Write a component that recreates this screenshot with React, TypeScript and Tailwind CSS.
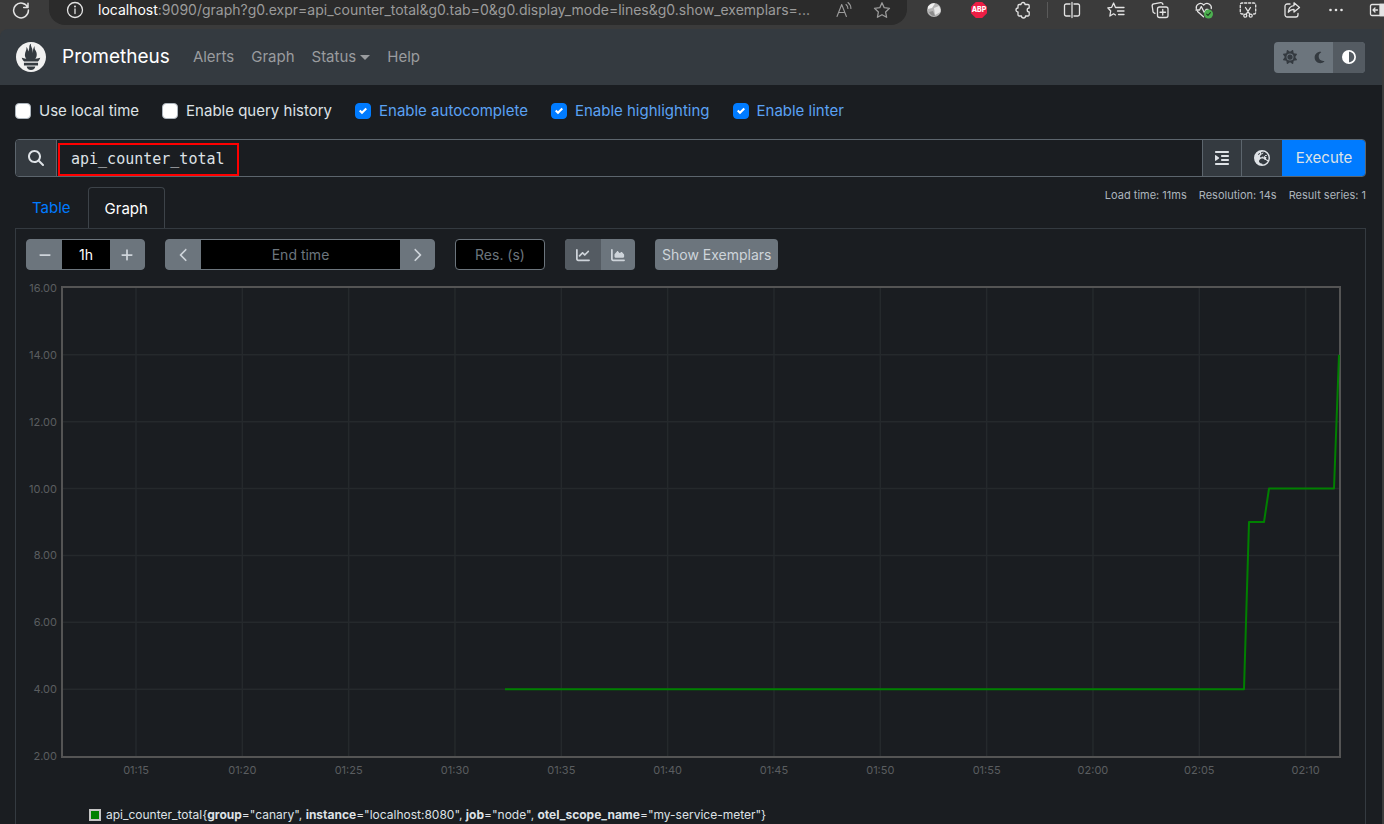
import React, { useState } from 'react';
import {
  FaMagnifyingGlass,
  FaIndent,
  FaEarthEurope,
  FaMinus,
  FaPlus,
  FaChevronLeft,
  FaChevronRight,
  FaChartLine,
  FaChartArea,
  FaSun,
  FaMoon,
  FaCircleHalfStroke,
} from 'react-icons/fa6';
import { SiPrometheus } from 'react-icons/si';

const stroke = {
  fill: 'none',
  stroke: 'currentColor',
  strokeWidth: 1.3,
  strokeLinecap: 'round' as const,
  strokeLinejoin: 'round' as const,
};

function Glyph({ children }: { children: React.ReactNode }) {
  return (
    <svg width="18" height="18" viewBox="0 0 18 18" aria-hidden="true" {...stroke}>
      {children}
    </svg>
  );
}

const toolbar: { name: string; icon: React.ReactNode }[] = [
  {
    name: 'Split screen',
    icon: (
      <Glyph>
        <path d="M7 3H3.2A1.7 1.7 0 0 0 1.5 4.7v8.6A1.7 1.7 0 0 0 3.2 15H7M11 3h3.8a1.7 1.7 0 0 1 1.7 1.7v8.6a1.7 1.7 0 0 1-1.7 1.7H11M9 1.5v15" />
      </Glyph>
    ),
  },
  {
    name: 'Favorites',
    icon: (
      <Glyph>
        <path d="M8.500 6.500 6.600 2 4.700 6.300.8 6.800l2.900 3.200-.8 5 3.700-2.200 1.900 1.200M8.500 6.500H17M10.500 10H17M11.500 13.500H17" />
      </Glyph>
    ),
  },
  {
    name: 'Collections',
    icon: (
      <Glyph>
        <rect x="6.5" y="6" width="10.500" height="10.500" rx="2" />
        <path d="M11.750 8.500v5.500M9 11.250h5.500M4 12.300 2.900 11.800A2 2 0 0 1 1.900 9.600L1.200 5.200A2 2 0 0 1 2.800 2.900L9.600 1.600a2 2 0 0 1 2.300 1.700" />
      </Glyph>
    ),
  },
  {
    name: 'Browser essentials',
    icon: (
      <Glyph>
        <path d="M1.300 7.500C.6 3.500 5.500.6 8.700 4 12 .6 17 3.500 16.300 7.500M2.500 10.500l6 5.300M1 9h3.500L6.300 5.500l3 6 1.700-3h2" />
        <circle cx="13.500" cy="13" r="4.500" fill="#4caf50" stroke="none" />
        <path d="m11.600 13.100 1.400 1.300 2.400-2.700" stroke="#1f3d20" strokeWidth="1.1" />
      </Glyph>
    ),
  },
  {
    name: 'Web capture',
    icon: (
      <Glyph>
        <path d="M4 13H3a1.700 1.700 0 0 1-1.700-1.700V3.700A1.700 1.700 0 0 1 3 2h12a1.700 1.700 0 0 1 1.700 1.700v7.600A1.700 1.700 0 0 1 15 13h-1" strokeDasharray="2.200 1.800" />
        <path d="m6.500 6.500 4.200 6.700M11.500 6.500l-4.200 6.700" />
        <circle cx="6.300" cy="14.700" r="1.500" />
        <circle cx="11.700" cy="14.700" r="1.500" />
      </Glyph>
    ),
  },
  {
    name: 'Share',
    icon: (
      <Glyph>
        <path d="M7 3H4.200A2.200 2.200 0 0 0 2 5.200v8.600A2.200 2.200 0 0 0 4.200 16h8.600a2.200 2.200 0 0 0 2.200-2.200V12.500" />
        <path d="M11 1.800 16.500 6.500 11 11V8.300C8.500 8.300 6.700 9.200 5.300 11.200 5.500 7.500 7.500 5 11 4.600Z" />
      </Glyph>
    ),
  },
];

function BrowserBar() {
  return (
    <header className="flex h-[29px] items-start overflow-hidden bg-[#3b3b3b] pl-3 text-[#e4e4e4]">
      <button aria-label="Reload" className="mr-[19px] flex h-5 w-[18px] shrink-0 items-center">
        <Glyph>
          <path d="M15.800 6.500A7.400 7.400 0 1 0 16.400 9M16 2.200v4.300h-4.300" strokeWidth="1.5" />
        </Glyph>
      </button>
      <div className="flex h-[25px] min-w-0 flex-1 items-start rounded-b-[16px] bg-[#2b2b2b] pr-4 pl-[17px]">
        <span className="flex h-5 shrink-0 items-center">
          <Glyph>
            <circle cx="9" cy="9" r="7.5" />
            <path d="M9 8v4.500" />
            <circle cx="9" cy="5.500" r=".4" />
          </Glyph>
        </span>
        <p className="ml-3.5 min-w-0 flex-1 truncate text-sm leading-5 text-[#9b9b9b]">
          <span className="text-white">localhost</span>
          :9090/graph?g0.expr=api_counter_total&amp;g0.tab=0&amp;g0.display_mode=lines&amp;g0.show_exemplars=...
        </p>
        <button aria-label="Read aloud" className="flex h-5 shrink-0 items-center text-[#9b9b9b]">
          <Glyph>
            <path d="M2 15.500 6.700 3.500l4.700 12M3.700 11.500h6M11 3.500q1.900 1.500 1.900 4M13 1.500q3 2.500 2.900 6" strokeWidth="1.1" />
          </Glyph>
        </button>
        <button aria-label="Add to favorites" className="ml-5 flex h-5 shrink-0 items-center text-[#9b9b9b]">
          <Glyph>
            <path d="m9 1.800 2.200 4.900 5.300.6-3.900 3.700 1 5.300L9 13.700l-4.600 2.600 1-5.300L1.500 7.300l5.300-.6Z" />
          </Glyph>
        </button>
      </div>
      <div className="ml-[18px] flex h-5 shrink-0 items-center">
        <button aria-label="Extension" className="flex w-[18px] justify-center">
          <svg width="16" height="16" viewBox="0 0 16 16" aria-hidden="true">
            <circle cx="8" cy="8" r="7" fill="#b5b5b5" />
            <path d="M2 4.500Q6 0 9 1.500L6 6 2 7Z" fill="#f2f2f2" />
            <path d="M8 6l5-2q2 3 1.500 6L9 13Z" fill="#e6e6e6" />
            <path d="M3 10l4-1 2 5q-4 .5-6-4Z" fill="#8b8b8b" />
          </svg>
        </button>
        <button
          aria-label="Ad blocker"
          className="ml-7 flex size-4 items-center justify-center bg-[#ed1e45] text-[7px] font-extrabold text-white [clip-path:polygon(30%_0,70%_0,100%_30%,100%_70%,70%_100%,30%_100%,0_70%,0_30%)]"
        >
          ABP
        </button>
        <button aria-label="Extensions" className="ml-7 flex">
          <Glyph>
            <path d="M6 3.500a2 2 0 0 1 4 0H13a1.200 1.200 0 0 1 1.200 1.200V7a2 2 0 1 0 0 4V13.800A1.200 1.200 0 0 1 13 15h-2.500a2 2 0 0 1-4 0H4.200A1.200 1.200 0 0 1 3 13.800V11a2 2 0 0 1 0-4V4.700A1.200 1.200 0 0 1 4.200 3.500Z" />
          </Glyph>
        </button>
        <span className="ml-3.5 h-4 w-px bg-[#5a5a5a]" />
        <div className="ml-[15px] flex items-center gap-[26px]">
          {toolbar.map((item) => (
            <button key={item.name} aria-label={item.name} className="flex">
              {item.icon}
            </button>
          ))}
          <button aria-label="Settings and more" className="flex">
            <svg width="18" height="18" viewBox="0 0 18 18" fill="currentColor" aria-hidden="true">
              <circle cx="3.500" cy="9" r="1.3" />
              <circle cx="9" cy="9" r="1.3" />
              <circle cx="14.500" cy="9" r="1.3" />
            </svg>
          </button>
        </div>
        <button aria-label="Sidebar" className="ml-6 flex w-[15px] overflow-hidden">
          <svg width="20" height="18" viewBox="0 0 20 18" aria-hidden="true" {...stroke} className="shrink-0">
            <rect x="1.500" y="3.500" width="17" height="11" rx="1.5" />
            <path d="M11 3.500h8v11h-8Z" fill="currentColor" />
            <path d="M8.500 9H4M6 7 4 9l2 2" />
          </svg>
        </button>
      </div>
    </header>
  );
}

function NavBar() {
  return (
    <div className="bg-[#3b3b3b]">
      <nav className="flex h-14 items-center rounded-tl-lg bg-[#343a40] pr-[17px] pl-4 text-[15px] leading-6 text-[#9a9c9f]">
        <a href="#home" className="flex items-center text-[19px] leading-7 text-white">
          <SiPrometheus className="mr-4 size-[30px] text-[#f1f1f1]" />
          Prometheus
        </a>
        <div className="ml-[23px] flex gap-[17px]">
          <a href="#alerts">Alerts</a>
          <a href="#graph">Graph</a>
          <a href="#status" className="flex items-center gap-1">
            Status
            <span className="border-x-[5px] border-t-[5px] border-x-transparent border-t-current" />
          </a>
          <a href="#help">Help</a>
        </div>
        <div className="ml-auto flex h-[31px] overflow-hidden rounded bg-[#6c757d] text-[#343a40]">
          <button aria-label="Use light theme" className="flex w-8 items-center justify-center">
            <FaSun className="size-[14px]" />
          </button>
          <button aria-label="Use dark theme" className="flex w-[27px] items-center justify-center">
            <FaMoon className="size-[13px]" />
          </button>
          <button aria-label="Use browser theme" className="flex w-8 items-center justify-center bg-[#545b62] text-white">
            <FaCircleHalfStroke className="size-[14px]" />
          </button>
        </div>
      </nav>
    </div>
  );
}

function Option({ label, initial }: { label: string; initial: boolean }) {
  const [checked, setChecked] = useState(initial);
  return (
    <label className={checked ? 'flex items-center gap-2 text-[#5ba2f4]' : 'flex items-center gap-2 text-[#dee2e6]'}>
      <span className="grid size-4 place-items-center">
        <input
          type="checkbox"
          checked={checked}
          onChange={(e) => setChecked(e.target.checked)}
          className="col-start-1 row-start-1 size-4 appearance-none rounded border border-[#adb5bd] bg-white checked:border-[#007bff] checked:bg-[#007bff]"
        />
        {checked && (
          <svg viewBox="0 0 8 8" className="pointer-events-none col-start-1 row-start-1 size-2" aria-hidden="true">
            <path fill="#fff" d="M6.564.75 2.974 4.353 1.436 2.824 0 4.260l2.974 2.990L8 2.193Z" />
          </svg>
        )}
      </span>
      {label}
    </label>
  );
}

function QueryBar() {
  return (
    <div className="mt-4 flex h-[38px] overflow-hidden rounded border border-[#5c656d] text-[#dee2e6]">
      <label htmlFor="expr" aria-label="Expression" className="flex w-[41px] items-center justify-center border-r border-[#5c656d] bg-[#343a40]">
        <FaMagnifyingGlass className="size-4" />
      </label>
      <div className="flex min-w-0 flex-1 items-end pl-px">
        <input
          id="expr"
          defaultValue="api_counter_total"
          spellCheck={false}
          className="h-[33px] w-[181px] border-2 border-[#f00] pb-px pl-[11px] font-['DejaVu_Sans_Mono',monospace] text-[15px] outline-none"
        />
      </div>
      <button aria-label="Format expression" className="flex w-[39px] items-center justify-center border-l border-[#5c656d] bg-[#343a40]">
        <FaIndent className="size-4" />
      </button>
      <button aria-label="Open metrics explorer" className="flex w-[41px] items-center justify-center border-l border-[#5c656d] bg-[#343a40]">
        <FaEarthEurope className="size-4" />
      </button>
      <button className="-my-px -mr-px w-[84px] bg-[#007bff] text-[15px]">Execute</button>
    </div>
  );
}

function GraphControls() {
  return (
    <div className="flex gap-5 text-sm text-[#ced4da]">
      <div className="flex h-[31px] overflow-hidden rounded border border-[#6c757d] bg-[#6c757d]">
        <button aria-label="Decrease range" className="flex w-[35px] items-center justify-center">
          <FaMinus className="size-[14px]" />
        </button>
        <input aria-label="Range" defaultValue="1h" className="w-12 bg-black text-center text-white" />
        <button aria-label="Increase range" className="flex w-[34px] items-center justify-center">
          <FaPlus className="size-[14px]" />
        </button>
      </div>
      <div className="flex h-[31px] overflow-hidden rounded border border-[#6c757d] bg-[#6c757d]">
        <button aria-label="Decrease end time" className="flex w-[35px] items-center justify-center">
          <FaChevronLeft className="size-[14px]" />
        </button>
        <input aria-label="End time" placeholder="End time" className="w-[199px] bg-black text-center placeholder:text-[#6c757d]" />
        <button aria-label="Increase end time" className="flex w-[34px] items-center justify-center">
          <FaChevronRight className="size-[14px]" />
        </button>
      </div>
      <input
        aria-label="Resolution in seconds"
        placeholder="Res. (s)"
        className="h-[31px] w-[90px] rounded border border-[#6c757d] bg-black text-center placeholder:text-[#6c757d]"
      />
      <div className="flex h-[31px] overflow-hidden rounded bg-[#6c757d]">
        <button aria-label="Show unstacked line graph" className="flex w-9 items-center justify-center bg-[#545b62]">
          <FaChartLine className="size-[14px]" />
        </button>
        <button aria-label="Show stacked graph" className="flex w-[34px] items-center justify-center">
          <FaChartArea className="size-[14px]" />
        </button>
      </div>
      <button className="h-[31px] rounded bg-[#6c757d] px-[7px]">Show Exemplars</button>
    </div>
  );
}

const PLOT_W = 1276;
const PLOT_H = 468;
const FRAME = 2;
const yTicks = [16, 14, 12, 10, 8, 6, 4, 2];
const xTicks = ['01:15', '01:20', '01:25', '01:30', '01:35', '01:40', '01:45', '01:50', '01:55', '02:00', '02:05', '02:10'];
const series: [number, number][] = [
  [442, 4],
  [1181, 4],
  [1186, 9],
  [1201, 9],
  [1206, 10],
  [1271, 10],
  [1276, 14],
];

const yAt = (v: number) => ((16 - v) / 14) * PLOT_H;
const xAt = (i: number) => 73 + i * 106.33;

function Chart() {
  return (
    <div className="mt-4 grid grid-cols-[35px_1fr] pr-[14px] text-[11px] leading-4 text-[#5a5d60]">
      <div className="relative">
        {yTicks.map((v) => (
          <span
            key={v}
            className="absolute right-1 -translate-y-1/2"
            style={{ top: `${((yAt(v) + FRAME) / (PLOT_H + 2 * FRAME)) * 100}%` }}
          >
            {v.toFixed(2)}
          </span>
        ))}
      </div>
      <div className="h-[472px] border-2 border-[#545454]">
        <svg
          viewBox={`0 0 ${PLOT_W} ${PLOT_H}`}
          preserveAspectRatio="none"
          className="block size-full overflow-visible"
          role="img"
          aria-label="api_counter_total over the last hour"
        >
          <g stroke="#25292c" strokeWidth="1.5">
            {xTicks.map((t, i) => (
              <path key={t} d={`M${xAt(i)} 0V${PLOT_H}`} vectorEffect="non-scaling-stroke" />
            ))}
            {yTicks.slice(1, -1).map((v) => (
              <path key={v} d={`M0 ${yAt(v)}H${PLOT_W}`} vectorEffect="non-scaling-stroke" />
            ))}
          </g>
          <polyline
            points={series.map(([x, v]) => `${x},${yAt(v)}`).join(' ')}
            fill="none"
            stroke="#008000"
            strokeWidth="2"
            strokeLinejoin="round"
            vectorEffect="non-scaling-stroke"
          />
        </svg>
      </div>
      <div className="relative col-start-2 mt-1 h-4">
        {xTicks.map((t, i) => (
          <span
            key={t}
            className="absolute -translate-x-1/2"
            style={{ left: `${((xAt(i) + FRAME) / (PLOT_W + 2 * FRAME)) * 100}%` }}
          >
            {t}
          </span>
        ))}
      </div>
    </div>
  );
}

function Legend() {
  return (
    <div className="mt-7 ml-[63px] flex items-center text-xs leading-[18px] text-[#dee2e6]">
      <span className="mr-[5px] size-3 border-2 border-[#c4c4c4] bg-[#008000]" />
      <p>
        api_counter_total{'{'}
        <b>group</b>="canary", <b>instance</b>="localhost:8080", <b>job</b>="node", <b>otel_scope_name</b>="my-service-meter"{'}'}
      </p>
    </div>
  );
}

export default function App() {
  return (
    <div className="flex min-h-screen flex-col bg-[#1a1d21] font-['Inter',sans-serif]">
      <BrowserBar />
      <div className="flex flex-1 flex-col border-r-2 border-[#3b3b3b]">
        <NavBar />
        <main className="flex flex-1 flex-col pr-4 pl-[15px]">
          <div className="mt-3.5 flex gap-[23px] text-[15px] leading-6">
            <Option label="Use local time" initial={false} />
            <Option label="Enable query history" initial={false} />
            <Option label="Enable autocomplete" initial />
            <Option label="Enable highlighting" initial />
            <Option label="Enable linter" initial />
          </div>
          <QueryBar />
          <div className="mt-2.5 flex items-start">
            <div role="tablist" className="-mb-px flex text-[15px] leading-6">
              <button role="tab" aria-selected="false" className="h-[42px] border border-transparent px-4 text-[#007bff]">
                Table
              </button>
              <button
                role="tab"
                aria-selected="true"
                className="h-[42px] rounded-t border border-b-0 border-[#3d4349] bg-[#1a1d21] px-4 text-white"
              >
                Graph
              </button>
            </div>
            <div className="ml-auto flex gap-3 text-[11px] leading-4 text-[#adb5bd]">
              <span>Load time: 11ms</span>
              <span>Resolution: 14s</span>
              <span>Result series: 1</span>
            </div>
          </div>
          <section className="flex-1 border-x border-t border-[#343a40] px-2.5 pt-2.5">
            <GraphControls />
            <Chart />
            <Legend />
          </section>
        </main>
      </div>
    </div>
  );
}
